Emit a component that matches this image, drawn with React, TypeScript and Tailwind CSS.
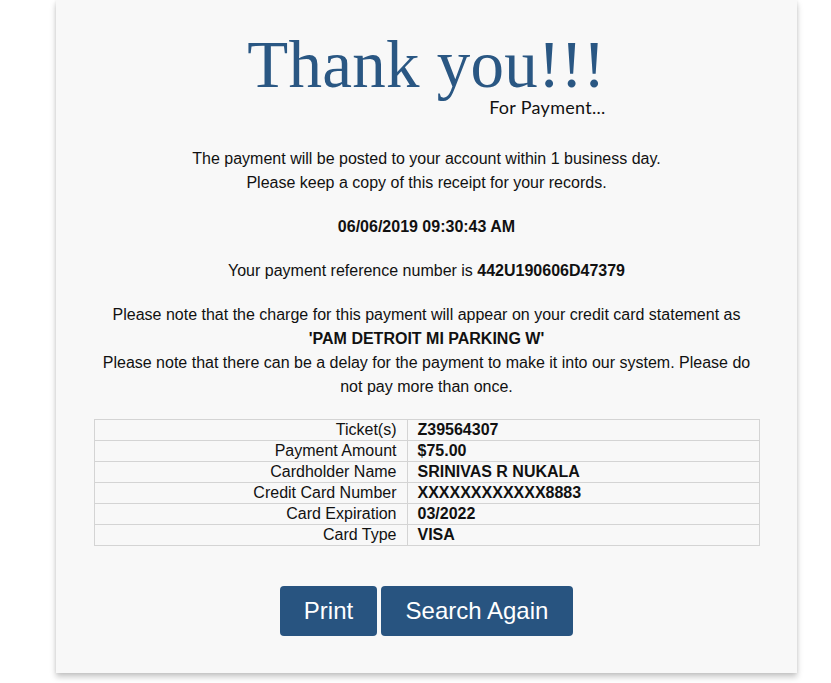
export default function App() {
  const rows: [string, string][] = [
    ["Ticket(s)", "Z39564307"],
    ["Payment Amount", "$75.00"],
    ["Cardholder Name", "SRINIVAS R NUKALA"],
    ["Credit Card Number", "XXXXXXXXXXXX8883"],
    ["Card Expiration", "03/2022"],
    ["Card Type", "VISA"],
  ];

  return (
    <div className="min-h-screen bg-white pl-[56px] font-['Liberation_Sans',Arial,sans-serif] text-[#111]">
      <div className="w-[741px] bg-[#f8f8f8] pt-[31px] pb-[37px] shadow-[0_4px_6px_rgba(0,0,0,0.22),0_0_3px_rgba(0,0,0,0.08)]">
        {/* heading */}
        <div className="flex justify-center">
          <div className="flex flex-col items-end">
            <h1 className="text-[67px] leading-[67px] tracking-[0.25px] text-[#2a5783] font-['Liberation_Serif','Times_New_Roman',serif]">
              Thank you!!!
            </h1>
            <div className="-mt-[2px] text-[18px] leading-[22px] tracking-[0.3px] font-['Lato','Open_Sans',sans-serif] text-[#111]">
              For Payment...
            </div>
          </div>
        </div>

        <div className="mx-auto mt-[29px] w-[666px] text-center text-[16px] leading-6">
          <p>
            The payment will be posted to your account within 1 business day.
            <br />
            Please keep a copy of this receipt for your records.
          </p>
          <p className="mt-5 font-bold">06/06/2019 09:30:43 AM</p>
          <p className="mt-5">
            Your payment reference number is <b>442U190606D47379</b>
          </p>
          <p className="mt-5">
            Please note that the charge for this payment will appear on your credit card statement as{" "}
            <b>'PAM DETROIT MI PARKING W'</b>
            <br />
            Please note that there can be a delay for the payment to make it into our system. Please do not pay more than once.
          </p>
        </div>

        <table className="mx-auto mt-5 w-[666px] border-collapse text-[16px] leading-5">
          <tbody>
            {rows.map(([k, v]) => (
              <tr key={k}>
                <td className="w-[313px] border border-[#d4d4d4] pr-[10px] text-right">{k}</td>
                <td className="border border-[#d4d4d4] pl-[10px] font-bold">{v}</td>
              </tr>
            ))}
          </tbody>
        </table>

        <div className="mt-[40px] flex justify-center gap-1">
          <button className="h-[50px] w-[97px] rounded bg-[#285480] text-[24px] text-white">Print</button>
          <button className="h-[50px] w-[192px] rounded bg-[#285480] text-[24px] text-white">Search Again</button>
        </div>
      </div>
    </div>
  );
}
